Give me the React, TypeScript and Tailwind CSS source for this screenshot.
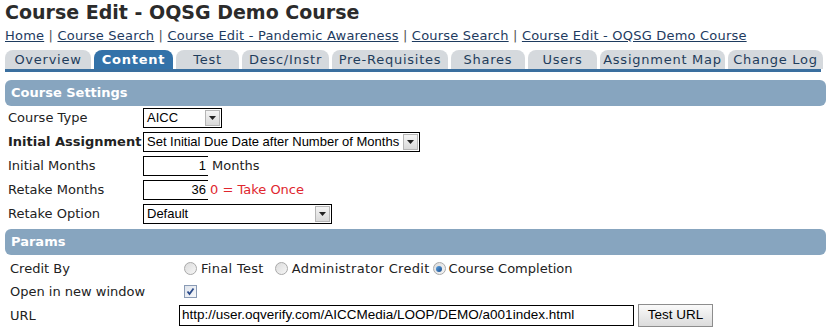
import React from "react";

const tabs = [
  { label: "Overview", w: "w-[86px]" },
  { label: "Content", w: "w-[79px]", active: true },
  { label: "Test", w: "w-[63px]" },
  { label: "Desc/Instr", w: "w-[87px]" },
  { label: "Pre-Requisites", w: "w-[116px]" },
  { label: "Shares", w: "w-[74px]" },
  { label: "Users", w: "w-[69px]" },
  { label: "Assignment Map", w: "w-[125px]" },
  { label: "Change Log", w: "w-[95px]" },
];

const crumbs = [
  "Home",
  "Course Search",
  "Course Edit - Pandemic Awareness",
  "Course Search",
  "Course Edit - OQSG Demo Course",
];

function Select({ value, w }: { value: string; w: string }) {
  return (
    <div className={`flex h-[20px] items-center border border-black bg-white ${w}`}>
      <span className="flex-1 truncate pl-[3px] font-['Liberation_Sans',Arial,sans-serif] text-[13px] text-black">
        {value}
      </span>
      <span className="mr-[1px] flex h-[16px] w-[15px] items-center justify-center border border-[#b5b5b5] bg-gradient-to-b from-[#f4f4f4] to-[#d9d9d9]">
        <svg width="7" height="4" viewBox="0 0 7 4">
          <path d="M0 0h7L3.5 4z" fill="#222" />
        </svg>
      </span>
    </div>
  );
}

function NumInput({ value }: { value: string }) {
  return (
    <div className="flex h-[20px] w-[65px] items-center justify-end border border-r-0 border-black bg-white pr-[2px] font-['Liberation_Sans',Arial,sans-serif] text-[13px] text-black">
      {value}
    </div>
  );
}

function Radio({ checked }: { checked?: boolean }) {
  return (
    <span className="flex h-[13px] w-[13px] items-center justify-center rounded-full border border-[#a9a9a9] bg-gradient-to-br from-[#dcdcdc] to-[#f6f6f6]">
      {checked && <span className="h-[6px] w-[6px] rounded-full bg-gradient-to-br from-[#5aa0e0] to-[#1e4f8c]" />}
    </span>
  );
}

function Bar({ title }: { title: string }) {
  return (
    <div className="flex h-[26px] w-[821px] items-center rounded-[6px] bg-[#87a5bf] pl-[6px] text-[13px] font-bold text-white">
      {title}
    </div>
  );
}

export default function App() {
  return (
    <div className="h-[333px] w-[832px] overflow-hidden bg-white px-[5px] font-['DejaVu_Sans',Verdana,sans-serif] text-[#222]">
      <h1 className="h-[24px] text-[19px] font-bold leading-[24px] text-[#2b2b2b]">Course Edit - OQSG Demo Course</h1>

      <div className="mt-[4px] flex h-[16px] items-center text-[13px] leading-[16px] tracking-[0.2px] text-[#555]">
        {crumbs.map((c, i) => (
          <React.Fragment key={i}>
            {i > 0 && <span className="whitespace-pre"> | </span>}
            <a className="text-[#1e3b5f] underline">{c}</a>
          </React.Fragment>
        ))}
      </div>

      <div className="mt-[6px] flex gap-[3px]">
        {tabs.map((t) => (
          <div
            key={t.label}
            className={`flex h-[19px] items-center justify-center rounded-t-[8px] text-[13px] leading-[19px] tracking-[0.75px] ${t.w} ${
              t.active ? "bg-[#3372a9] font-bold text-white" : "bg-[#d5d9dd] text-[#1f3d5c]"
            }`}
          >
            {t.label}
          </div>
        ))}
      </div>
      <div className="h-[3px] w-[816px] bg-[#3a6f9f]" />

      <div className="mt-[8px]">
        <Bar title="Course Settings" />
      </div>

      <div className="pl-[3px] text-[13px]">
        <div className="flex h-6 items-center">
          <div className="w-[135px]">Course Type</div>
          <Select value="AICC" w="w-[79px]" />
        </div>
        <div className="flex h-6 items-center">
          <div className="w-[135px] font-bold">Initial Assignment</div>
          <Select value="Set Initial Due Date after Number of Months" w="w-[277px]" />
        </div>
        <div className="flex h-6 items-center">
          <div className="w-[135px]">Initial Months</div>
          <NumInput value="1" />
          <span className="ml-[4px]">Months</span>
        </div>
        <div className="flex h-6 items-center">
          <div className="w-[135px]">Retake Months</div>
          <NumInput value="36" />
          <span className="ml-[2px] text-[#e0262e]">0 = Take Once</span>
        </div>
        <div className="flex h-6 items-center">
          <div className="w-[135px]">Retake Option</div>
          <Select value="Default" w="w-[189px]" />
        </div>
      </div>

      <div className="mt-[3px]">
        <Bar title="Params" />
      </div>

      <div className="mt-[2px] pl-[5px] text-[13px]">
        <div className="flex h-[23px] items-center">
          <div className="w-[169px]">Credit By</div>
          <div className="ml-[5px] flex items-center">
            <Radio />
            <span className="ml-[4px] mr-[11px] tracking-[0.3px]">Final Test</span>
            <Radio />
            <span className="ml-[4px] mr-[3px] tracking-[0.3px]">Administrator Credit</span>
            <Radio checked />
            <span className="ml-[3px]">Course Completion</span>
          </div>
        </div>
        <div className="flex h-[23px] items-center">
          <div className="w-[169px]">Open in new window</div>
          <span className="ml-[5px] flex h-[13px] w-[13px] items-center justify-center border border-[#8a9bb5] bg-gradient-to-br from-[#dfe4ec] to-[#f7f8fa]">
            <svg width="9" height="9" viewBox="0 0 9 9">
              <path d="M1.5 4.5l2 2.5 4-5.5" fill="none" stroke="#2a4a8a" strokeWidth="1.8" />
            </svg>
          </span>
        </div>
        <div className="flex h-[25px] items-center">
          <div className="w-[169px]">URL</div>
          <div className="flex h-[21px] w-[455px] items-center border border-black bg-white pl-[2px] font-['Liberation_Sans',Arial,sans-serif] text-[13.5px] text-black">
            http://user.oqverify.com/AICCMedia/LOOP/DEMO/a001index.html
          </div>
          <button className="ml-[4px] h-[23px] w-[75px] border border-[#8d8d8d] bg-gradient-to-b from-[#fafafa] to-[#dcdcdc] font-['Liberation_Sans',Arial,sans-serif] text-[13.5px] text-black">
            Test URL
          </button>
        </div>
      </div>
    </div>
  );
}
